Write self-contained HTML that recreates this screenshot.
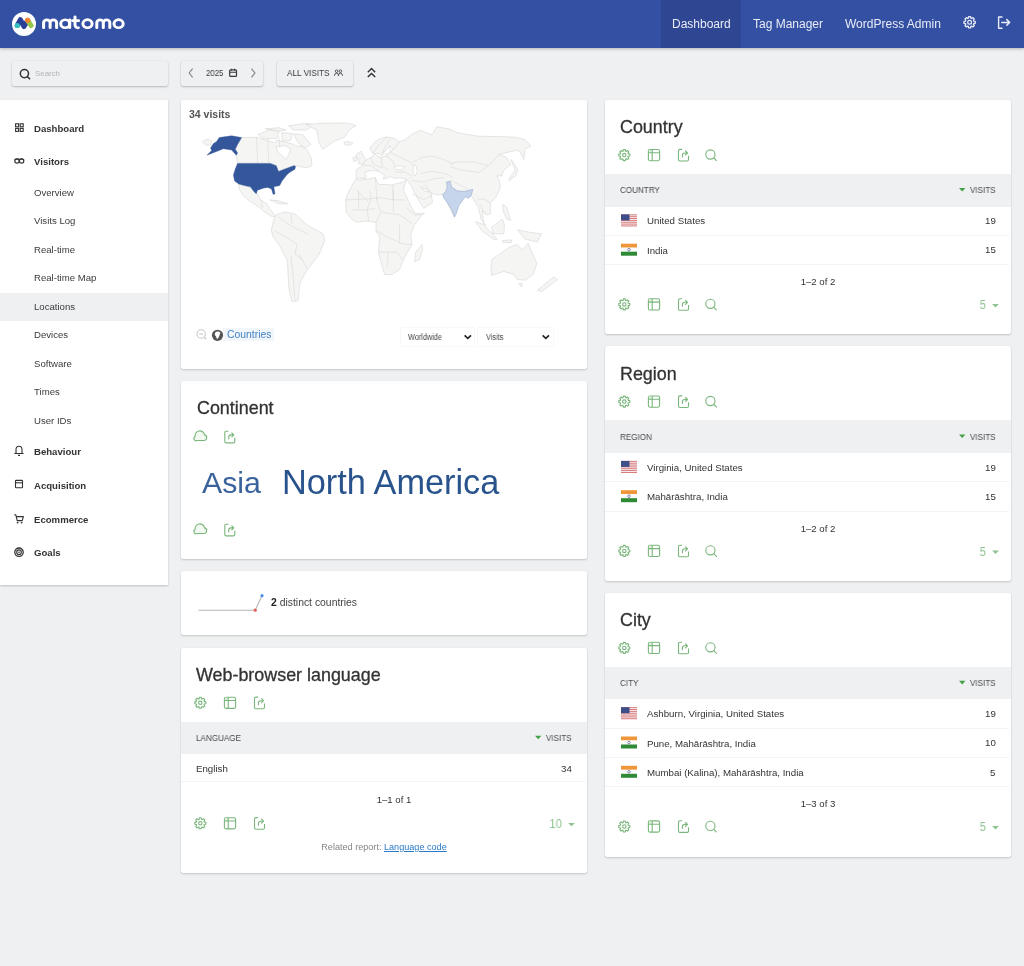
<!DOCTYPE html>
<html><head><meta charset="utf-8"><title>Matomo</title>
<style>
html,body{margin:0;padding:0;}
body{width:1024px;height:966px;overflow:hidden;position:relative;background:#eef0f1;font-family:"Liberation Sans",sans-serif;}
.t{position:absolute;line-height:1;white-space:nowrap;will-change:transform;}
svg{display:block;}
</style></head><body>

<div style="position:absolute;left:0px;top:0px;width:1024px;height:48px;background:#3450a3;box-shadow:0 1px 3px rgba(0,0,0,0.25);z-index:2;"></div>
<div style="position:absolute;left:661px;top:0px;width:80px;height:48px;background:#2f4793;z-index:3;"></div>
<div class="t" style="left:672.00px;top:18.04px;font-size:12px;color:#e9ecf6;font-weight:normal;z-index:4;">Dashboard</div>
<div class="t" style="left:753.00px;top:18.04px;font-size:12px;color:#e9ecf6;font-weight:normal;z-index:4;">Tag Manager</div>
<div class="t" style="left:845.00px;top:18.04px;font-size:12px;color:#e9ecf6;font-weight:normal;z-index:4;">WordPress Admin</div>
<svg style="position:absolute;left:960px;top:13px;z-index:4;" width="18" height="18" viewBox="960 13 18 18"><path d="M973.71,21.03 L975.22,21.34 L975.22,23.26 L973.71,23.57 L973.40,24.31 L974.25,25.59 L972.89,26.95 L971.61,26.10 L970.87,26.41 L970.56,27.92 L968.64,27.92 L968.33,26.41 L967.59,26.10 L966.31,26.95 L964.95,25.59 L965.80,24.31 L965.49,23.57 L963.98,23.26 L963.98,21.34 L965.49,21.03 L965.80,20.29 L964.95,19.01 L966.31,17.65 L967.59,18.50 L968.33,18.19 L968.64,16.68 L970.56,16.68 L970.87,18.19 L971.61,18.50 L972.89,17.65 L974.25,19.01 L973.40,20.29Z" fill="none" stroke="#e9ecf6" stroke-width="1.3" stroke-linejoin="round"/><circle cx="969.6" cy="22.3" r="1.9" fill="none" stroke="#e9ecf6" stroke-width="1.2"/></svg>
<svg style="position:absolute;left:994px;top:12px;z-index:4;" width="20" height="20" viewBox="994 12 20 20"><path d="M1002,17 H998.6 V28.2 H1002" fill="none" stroke="#e9ecf6" stroke-width="1.4" stroke-linejoin="round" stroke-linecap="round"/><path d="M1001.8,22.4 H1009.6 M1006.8,19.6 L1009.6,22.4 L1006.8,25.2" fill="none" stroke="#e9ecf6" stroke-width="1.5" stroke-linecap="round" stroke-linejoin="round"/></svg>
<svg style="position:absolute;left:0px;top:0px;z-index:4;" width="48" height="47" viewBox="0 0 48 47"><circle cx="24" cy="23.9" r="12" fill="#ffffff"/>
<path d="M17.3,25.5 L20.4,19.6 L24,26.6 L27.6,20.4" fill="none" stroke="#2a3f96" stroke-width="5" stroke-linecap="round" stroke-linejoin="round"/>
<path d="M27.7,20.4 L31,25.5" fill="none" stroke="#95c748" stroke-width="5" stroke-linecap="round"/>
<circle cx="17.3" cy="25.5" r="2.6" fill="#35bfc0"/>
<circle cx="27.7" cy="20.3" r="2.6" fill="#f38334"/>
</svg>
<svg style="position:absolute;left:38px;top:12px;z-index:4;" width="90" height="22" viewBox="38 12 90 22"><g transform="matrix(1 0 0 0.88 0 2.62)"><path d="M43.6,28.6 V22.8 A3.25,3.25 0 0 1 50.1,22.8 V28.6 M50.1,22.8 A3.25,3.25 0 0 1 56.6,22.8 V28.6" fill="none" stroke="#ffffff" stroke-width="3.0" stroke-linecap="round"/><circle cx="65.2" cy="24" r="4.5" fill="none" stroke="#ffffff" stroke-width="3.0"/><path d="M69.7,19.6 V28.6" stroke="#ffffff" stroke-width="3.0" stroke-linecap="round"/><path d="M75,16.2 V25.4 A3,3 0 0 0 78.4,28.6 M72.6,20.5 H78.6" fill="none" stroke="#ffffff" stroke-width="3.0" stroke-linecap="round"/><circle cx="87.5" cy="24" r="4.6" fill="none" stroke="#ffffff" stroke-width="3.0"/><path d="M96.8,28.6 V22.8 A3.25,3.25 0 0 1 103.3,22.8 V28.6 M103.3,22.8 A3.25,3.25 0 0 1 109.8,22.8 V28.6" fill="none" stroke="#ffffff" stroke-width="3.0" stroke-linecap="round"/><circle cx="118.6" cy="24" r="4.6" fill="none" stroke="#ffffff" stroke-width="3.0"/></g></svg>
<div style="position:absolute;left:12px;top:61px;width:156px;height:25px;background:#eef0f1;box-shadow:0 1px 2px rgba(0,0,0,0.22),0 0 1px rgba(0,0,0,0.12);border-radius:2px;"></div>
<svg style="position:absolute;left:17px;top:66px;" width="16" height="16" viewBox="17 66 16 16"><circle cx="24.4" cy="73.6" r="4.1" fill="none" stroke="#333" stroke-width="1.5"/><path d="M27.4,76.6 L29.6,78.8" stroke="#333" stroke-width="1.6" stroke-linecap="round"/></svg>
<div class="t" style="left:35.00px;top:70.11px;font-size:7.9px;color:#b5b5b5;font-weight:normal;">Search</div>
<div style="position:absolute;left:181px;top:61px;width:82px;height:25px;background:#eef0f1;box-shadow:0 1px 2px rgba(0,0,0,0.22),0 0 1px rgba(0,0,0,0.12);border-radius:2px;"></div>
<svg style="position:absolute;left:185px;top:66px;" width="12" height="14" viewBox="185 66 12 14"><path d="M192.6,68.6 L189.2,73 L192.6,77.4" fill="none" stroke="#888" stroke-width="1.2"/></svg>
<div class="t" style="left:206.20px;top:68.81px;font-size:9.2px;color:#3a3a3a;font-weight:normal;transform:scaleX(0.85);transform-origin:0 0;">2025</div>
<svg style="position:absolute;left:227px;top:66px;" width="12" height="14" viewBox="227 66 12 14"><rect x="229.7" y="69.8" width="6.8" height="6.6" rx="0.9" fill="none" stroke="#3a3a3a" stroke-width="1.2"/><path d="M229.7,72.2 H236.5 M231.6,68.8 V70.4 M234.6,68.8 V70.4" stroke="#3a3a3a" stroke-width="1.1"/></svg>
<svg style="position:absolute;left:246px;top:66px;" width="12" height="14" viewBox="246 66 12 14"><path d="M251.5,68.6 L254.9,73 L251.5,77.4" fill="none" stroke="#888" stroke-width="1.2"/></svg>
<div style="position:absolute;left:277px;top:61px;width:76px;height:25px;background:#eef0f1;box-shadow:0 1px 2px rgba(0,0,0,0.22),0 0 1px rgba(0,0,0,0.12);border-radius:2px;"></div>
<div class="t" style="left:287.00px;top:68.47px;font-size:9.6px;color:#3a3a3a;font-weight:normal;transform:scaleX(0.855);transform-origin:0 0;">ALL VISITS</div>
<svg style="position:absolute;left:332px;top:66px;" width="13" height="12" viewBox="332 66 13 12"><circle cx="336.6" cy="71.2" r="1.3" fill="none" stroke="#555" stroke-width="1.0"/><circle cx="340.4" cy="71.2" r="1.3" fill="none" stroke="#555" stroke-width="1.0"/><path d="M334.4,75.8 Q334.6,73.2 336.6,73.2 Q338.6,73.2 338.8,75.8 M338.2,75.8 Q338.4,73.2 340.4,73.2 Q342.4,73.2 342.6,75.8" fill="none" stroke="#555" stroke-width="1.0"/></svg>
<svg style="position:absolute;left:364px;top:64px;" width="14" height="16" viewBox="364 64 14 16"><path d="M367.8,72.3 L371.5,68.6 L375.2,72.3 M367.8,77.1 L371.5,73.4 L375.2,77.1" fill="none" stroke="#333" stroke-width="1.4" stroke-linejoin="miter"/></svg>
<div style="position:absolute;left:0px;top:100px;width:168px;height:485px;background:#fff;box-shadow:0 1px 2px rgba(0,0,0,0.2);"></div>
<div style="position:absolute;left:0px;top:293px;width:168px;height:28px;background:#eef0f1;"></div>
<div class="t" style="left:34.00px;top:123.57px;font-size:9.6px;color:#333;font-weight:bold;">Dashboard</div>
<div class="t" style="left:34.00px;top:157.27px;font-size:9.6px;color:#333;font-weight:bold;">Visitors</div>
<div class="t" style="left:34.00px;top:446.87px;font-size:9.6px;color:#333;font-weight:bold;">Behaviour</div>
<div class="t" style="left:34.00px;top:480.57px;font-size:9.6px;color:#333;font-weight:bold;">Acquisition</div>
<div class="t" style="left:34.00px;top:514.57px;font-size:9.6px;color:#333;font-weight:bold;">Ecommerce</div>
<div class="t" style="left:34.00px;top:548.17px;font-size:9.6px;color:#333;font-weight:bold;">Goals</div>
<div class="t" style="left:34.00px;top:187.87px;font-size:9.6px;color:#3b3b3b;font-weight:normal;">Overview</div>
<div class="t" style="left:34.00px;top:216.37px;font-size:9.6px;color:#3b3b3b;font-weight:normal;">Visits Log</div>
<div class="t" style="left:34.00px;top:244.87px;font-size:9.6px;color:#3b3b3b;font-weight:normal;">Real-time</div>
<div class="t" style="left:34.00px;top:273.37px;font-size:9.6px;color:#3b3b3b;font-weight:normal;">Real-time Map</div>
<div class="t" style="left:34.00px;top:301.87px;font-size:9.6px;color:#3b3b3b;font-weight:normal;">Locations</div>
<div class="t" style="left:34.00px;top:330.37px;font-size:9.6px;color:#3b3b3b;font-weight:normal;">Devices</div>
<div class="t" style="left:34.00px;top:358.87px;font-size:9.6px;color:#3b3b3b;font-weight:normal;">Software</div>
<div class="t" style="left:34.00px;top:387.17px;font-size:9.6px;color:#3b3b3b;font-weight:normal;">Times</div>
<div class="t" style="left:34.00px;top:415.57px;font-size:9.6px;color:#3b3b3b;font-weight:normal;">User IDs</div>
<svg style="position:absolute;left:13px;top:121px;" width="12" height="12" viewBox="13 121 12 12"><rect x="15.6" y="123.8" width="3" height="3" fill="none" stroke="#333" stroke-width="1.1"/><rect x="15.6" y="128.4" width="3" height="3" fill="none" stroke="#333" stroke-width="1.1"/><rect x="20.2" y="123.8" width="3" height="3" fill="none" stroke="#333" stroke-width="1.1"/><rect x="20.2" y="128.4" width="3" height="3" fill="none" stroke="#333" stroke-width="1.1"/></svg>
<svg style="position:absolute;left:12px;top:155px;" width="14" height="10" viewBox="12 155 14 10"><circle cx="17" cy="161" r="2.2" fill="none" stroke="#333" stroke-width="1.2"/><circle cx="21.6" cy="161" r="2.2" fill="none" stroke="#333" stroke-width="1.2"/><path d="M14.6,160 Q16,158.4 19.3,159.2 Q22.6,158.4 24,160" fill="none" stroke="#333" stroke-width="1.1"/></svg>
<svg style="position:absolute;left:12px;top:444px;" width="14" height="14" viewBox="12 444 14 14"><path d="M16,453.5 V449.6 Q16,446.2 19,446.2 Q22,446.2 22,449.6 V453.5 H23.2 H14.8 Z" fill="none" stroke="#333" stroke-width="1.1" stroke-linejoin="round"/><path d="M18,455.4 H20" stroke="#333" stroke-width="1.1"/></svg>
<svg style="position:absolute;left:12px;top:478px;" width="14" height="14" viewBox="12 478 14 14"><rect x="15.5" y="480.4" width="7" height="7.4" rx="0.6" fill="none" stroke="#333" stroke-width="1.1"/><path d="M15.5,482.8 H22.5" stroke="#333" stroke-width="1.1"/></svg>
<svg style="position:absolute;left:12px;top:512px;" width="14" height="14" viewBox="12 512 14 14"><path d="M14.2,514.8 H15.8 L17.2,520.6 H22.2 L23.4,516.6 H16.4" fill="none" stroke="#333" stroke-width="1.1" stroke-linejoin="round"/><circle cx="17.6" cy="522.6" r="0.9" fill="#333"/><circle cx="21.6" cy="522.6" r="0.9" fill="#333"/></svg>
<svg style="position:absolute;left:12px;top:545px;" width="14" height="14" viewBox="12 545 14 14"><circle cx="19" cy="552.2" r="4.2" fill="none" stroke="#333" stroke-width="1.3"/><circle cx="19" cy="552.2" r="2.3" fill="none" stroke="#333" stroke-width="1.1"/><circle cx="19" cy="552.2" r="0.8" fill="#333"/></svg>
<div style="position:absolute;left:605px;top:100px;width:406px;height:234px;background:#fff;border-radius:2px;box-shadow:0 1px 2px rgba(0,0,0,0.18),0 0 1px rgba(0,0,0,0.10);"></div>
<div class="t" style="left:620.00px;top:119.15px;font-size:17.9px;color:#333;font-weight:normal;-webkit-text-stroke:0.3px #333;">Country</div>
<svg style="position:absolute;left:0px;top:145px;" width="1024" height="20" viewBox="0 145 1024 20"><path d="M628.22,153.89 L629.82,154.15 L629.82,156.05 L628.22,156.31 L627.93,157.01 L628.87,158.33 L627.53,159.67 L626.21,158.73 L625.51,159.02 L625.25,160.62 L623.35,160.62 L623.09,159.02 L622.39,158.73 L621.07,159.67 L619.73,158.33 L620.67,157.01 L620.38,156.31 L618.78,156.05 L618.78,154.15 L620.38,153.89 L620.67,153.19 L619.73,151.87 L621.07,150.53 L622.39,151.47 L623.09,151.18 L623.35,149.58 L625.25,149.58 L625.51,151.18 L626.21,151.47 L627.53,150.53 L628.87,151.87 L627.93,153.19Z" fill="none" stroke="#79b67b" stroke-width="1.1" stroke-linejoin="round"/><circle cx="624.3" cy="155.1" r="1.7" fill="none" stroke="#79b67b" stroke-width="1.1"/><rect x="648.40" y="149.50" width="11.2" height="11.2" rx="1.6" fill="none" stroke="#79b67b" stroke-width="1.1"/><rect x="648.90" y="150.00" width="3.2" height="2.8" fill="#dff0df"/><path d="M648.40,152.80 H659.60 M652.20,149.50 V160.70" stroke="#79b67b" stroke-width="1.1"/><path d="M682.10,149.40 H679.90 Q678.50,149.40 678.50,150.80 V159.60 Q678.50,161.00 679.90,161.00 H687.10 Q688.50,161.00 688.50,159.60 V155.80" fill="none" stroke="#79b67b" stroke-width="1.1" stroke-linejoin="round"/><path d="M682.40,157.00 V155.40 Q682.40,153.00 684.70,153.00 H687.30 M685.50,151.00 L687.50,153.00 L685.50,155.00" fill="none" stroke="#79b67b" stroke-width="1.1" stroke-linecap="round" stroke-linejoin="round"/><circle cx="710.40" cy="154.50" r="4.6" fill="none" stroke="#79b67b" stroke-width="1.1"/><path d="M713.80,157.90 L716.40,160.50" stroke="#79b67b" stroke-width="1.1" stroke-linecap="round"/></svg>
<div style="position:absolute;left:605px;top:174px;width:406px;height:33px;background:#eef0f1;"></div>
<div class="t" style="left:620.00px;top:186.14px;font-size:8.7px;color:#4a4a4a;font-weight:normal;transform:scaleX(0.93);transform-origin:0 0;">COUNTRY</div>
<div class="t" style="right:28.20px;top:186.14px;font-size:8.7px;color:#4a4a4a;font-weight:normal;transform:scaleX(0.93);transform-origin:100% 0;">VISITS</div>
<svg style="position:absolute;left:958px;top:184px;" width="10" height="8" viewBox="958 184 10 8"><path d="M959.00,188.00 H965.40 L962.20,191.60 Z" fill="#43a047"/></svg>
<div class="t" style="left:647.00px;top:216.49px;font-size:9.7px;color:#333;font-weight:normal;">United States</div>
<div class="t" style="right:28.20px;top:216.19px;font-size:9.7px;color:#333;font-weight:normal;">19</div>
<div style="position:absolute;left:605px;top:235px;width:404px;height:1px;background:#f2f3f4;"></div>
<div class="t" style="left:647.00px;top:245.79px;font-size:9.7px;color:#333;font-weight:normal;">India</div>
<div class="t" style="right:28.20px;top:245.49px;font-size:9.7px;color:#333;font-weight:normal;">15</div>
<div style="position:absolute;left:605px;top:264px;width:404px;height:1px;background:#f2f3f4;"></div>
<svg style="position:absolute;left:605px;top:205px;" width="40" height="61" viewBox="605 205 40 61"><rect x="621" y="214.4" width="16" height="12" fill="#f4f4f8"/><rect x="621" y="214.40" width="16" height="0.92" fill="#d9706f"/><rect x="621" y="216.25" width="16" height="0.92" fill="#d9706f"/><rect x="621" y="218.09" width="16" height="0.92" fill="#d9706f"/><rect x="621" y="219.94" width="16" height="0.92" fill="#d9706f"/><rect x="621" y="221.78" width="16" height="0.92" fill="#d9706f"/><rect x="621" y="223.63" width="16" height="0.92" fill="#d9706f"/><rect x="621" y="225.48" width="16" height="0.92" fill="#d9706f"/><rect x="621" y="214.4" width="8.5" height="6" fill="#3d4e88"/><rect x="621" y="243.70000000000002" width="16" height="4" fill="#f0963a"/><rect x="621" y="247.70000000000002" width="16" height="4" fill="#fbfbfb"/><rect x="621" y="251.70000000000002" width="16" height="4" fill="#2f8a36"/><circle cx="629" cy="249.70000000000002" r="1.3" fill="none" stroke="#4a4a8a" stroke-width="0.6"/></svg>
<div class="t" style="left:618.30px;width:400px;text-align:center;top:277.07px;font-size:9.6px;color:#333;font-weight:normal;">1–2 of 2</div>
<svg style="position:absolute;left:0px;top:294px;" width="1024" height="20" viewBox="0 294 1024 20"><path d="M628.22,303.19 L629.82,303.45 L629.82,305.35 L628.22,305.61 L627.93,306.31 L628.87,307.63 L627.53,308.97 L626.21,308.03 L625.51,308.32 L625.25,309.92 L623.35,309.92 L623.09,308.32 L622.39,308.03 L621.07,308.97 L619.73,307.63 L620.67,306.31 L620.38,305.61 L618.78,305.35 L618.78,303.45 L620.38,303.19 L620.67,302.49 L619.73,301.17 L621.07,299.83 L622.39,300.77 L623.09,300.48 L623.35,298.88 L625.25,298.88 L625.51,300.48 L626.21,300.77 L627.53,299.83 L628.87,301.17 L627.93,302.49Z" fill="none" stroke="#79b67b" stroke-width="1.1" stroke-linejoin="round"/><circle cx="624.3" cy="304.4" r="1.7" fill="none" stroke="#79b67b" stroke-width="1.1"/><rect x="648.40" y="298.80" width="11.2" height="11.2" rx="1.6" fill="none" stroke="#79b67b" stroke-width="1.1"/><rect x="648.90" y="299.30" width="3.2" height="2.8" fill="#dff0df"/><path d="M648.40,302.10 H659.60 M652.20,298.80 V310.00" stroke="#79b67b" stroke-width="1.1"/><path d="M682.10,298.70 H679.90 Q678.50,298.70 678.50,300.10 V308.90 Q678.50,310.30 679.90,310.30 H687.10 Q688.50,310.30 688.50,308.90 V305.10" fill="none" stroke="#79b67b" stroke-width="1.1" stroke-linejoin="round"/><path d="M682.40,306.30 V304.70 Q682.40,302.30 684.70,302.30 H687.30 M685.50,300.30 L687.50,302.30 L685.50,304.30" fill="none" stroke="#79b67b" stroke-width="1.1" stroke-linecap="round" stroke-linejoin="round"/><circle cx="710.40" cy="303.80" r="4.6" fill="none" stroke="#79b67b" stroke-width="1.1"/><path d="M713.80,307.20 L716.40,309.80" stroke="#79b67b" stroke-width="1.1" stroke-linecap="round"/></svg>
<div class="t" style="right:37.70px;top:299.32px;font-size:12.5px;color:#8fc391;font-weight:normal;transform:scaleX(0.9);transform-origin:100% 0;">5</div>
<svg style="position:absolute;left:991px;top:301px;" width="10" height="8" viewBox="991 301 10 8"><path d="M992.10,304.00 H998.90 L995.50,307.40 Z" fill="#8fc391"/></svg>
<div style="position:absolute;left:605px;top:346px;width:406px;height:235px;background:#fff;border-radius:2px;box-shadow:0 1px 2px rgba(0,0,0,0.18),0 0 1px rgba(0,0,0,0.10);"></div>
<div class="t" style="left:620.00px;top:365.65px;font-size:17.9px;color:#333;font-weight:normal;-webkit-text-stroke:0.3px #333;">Region</div>
<svg style="position:absolute;left:0px;top:391px;" width="1024" height="20" viewBox="0 391 1024 20"><path d="M628.22,400.39 L629.82,400.65 L629.82,402.55 L628.22,402.81 L627.93,403.51 L628.87,404.83 L627.53,406.17 L626.21,405.23 L625.51,405.52 L625.25,407.12 L623.35,407.12 L623.09,405.52 L622.39,405.23 L621.07,406.17 L619.73,404.83 L620.67,403.51 L620.38,402.81 L618.78,402.55 L618.78,400.65 L620.38,400.39 L620.67,399.69 L619.73,398.37 L621.07,397.03 L622.39,397.97 L623.09,397.68 L623.35,396.08 L625.25,396.08 L625.51,397.68 L626.21,397.97 L627.53,397.03 L628.87,398.37 L627.93,399.69Z" fill="none" stroke="#79b67b" stroke-width="1.1" stroke-linejoin="round"/><circle cx="624.3" cy="401.6" r="1.7" fill="none" stroke="#79b67b" stroke-width="1.1"/><rect x="648.40" y="396.00" width="11.2" height="11.2" rx="1.6" fill="none" stroke="#79b67b" stroke-width="1.1"/><rect x="648.90" y="396.50" width="3.2" height="2.8" fill="#dff0df"/><path d="M648.40,399.30 H659.60 M652.20,396.00 V407.20" stroke="#79b67b" stroke-width="1.1"/><path d="M682.10,395.90 H679.90 Q678.50,395.90 678.50,397.30 V406.10 Q678.50,407.50 679.90,407.50 H687.10 Q688.50,407.50 688.50,406.10 V402.30" fill="none" stroke="#79b67b" stroke-width="1.1" stroke-linejoin="round"/><path d="M682.40,403.50 V401.90 Q682.40,399.50 684.70,399.50 H687.30 M685.50,397.50 L687.50,399.50 L685.50,401.50" fill="none" stroke="#79b67b" stroke-width="1.1" stroke-linecap="round" stroke-linejoin="round"/><circle cx="710.40" cy="401.00" r="4.6" fill="none" stroke="#79b67b" stroke-width="1.1"/><path d="M713.80,404.40 L716.40,407.00" stroke="#79b67b" stroke-width="1.1" stroke-linecap="round"/></svg>
<div style="position:absolute;left:605px;top:420px;width:406px;height:33px;background:#eef0f1;"></div>
<div class="t" style="left:620.00px;top:432.64px;font-size:8.7px;color:#4a4a4a;font-weight:normal;transform:scaleX(0.93);transform-origin:0 0;">REGION</div>
<div class="t" style="right:28.20px;top:432.64px;font-size:8.7px;color:#4a4a4a;font-weight:normal;transform:scaleX(0.93);transform-origin:100% 0;">VISITS</div>
<svg style="position:absolute;left:958px;top:431px;" width="10" height="8" viewBox="958 431 10 8"><path d="M959.00,434.50 H965.40 L962.20,438.10 Z" fill="#43a047"/></svg>
<div class="t" style="left:647.00px;top:462.99px;font-size:9.7px;color:#333;font-weight:normal;">Virginia, United States</div>
<div class="t" style="right:28.20px;top:462.69px;font-size:9.7px;color:#333;font-weight:normal;">19</div>
<div style="position:absolute;left:605px;top:481px;width:404px;height:1px;background:#f2f3f4;"></div>
<div class="t" style="left:647.00px;top:492.29px;font-size:9.7px;color:#333;font-weight:normal;">Mahārāshtra, India</div>
<div class="t" style="right:28.20px;top:491.99px;font-size:9.7px;color:#333;font-weight:normal;">15</div>
<div style="position:absolute;left:605px;top:511px;width:404px;height:1px;background:#f2f3f4;"></div>
<svg style="position:absolute;left:605px;top:452px;" width="40" height="61" viewBox="605 452 40 61"><rect x="621" y="460.90000000000003" width="16" height="12" fill="#f4f4f8"/><rect x="621" y="460.90" width="16" height="0.92" fill="#d9706f"/><rect x="621" y="462.75" width="16" height="0.92" fill="#d9706f"/><rect x="621" y="464.59" width="16" height="0.92" fill="#d9706f"/><rect x="621" y="466.44" width="16" height="0.92" fill="#d9706f"/><rect x="621" y="468.28" width="16" height="0.92" fill="#d9706f"/><rect x="621" y="470.13" width="16" height="0.92" fill="#d9706f"/><rect x="621" y="471.98" width="16" height="0.92" fill="#d9706f"/><rect x="621" y="460.90000000000003" width="8.5" height="6" fill="#3d4e88"/><rect x="621" y="490.20000000000005" width="16" height="4" fill="#f0963a"/><rect x="621" y="494.20000000000005" width="16" height="4" fill="#fbfbfb"/><rect x="621" y="498.20000000000005" width="16" height="4" fill="#2f8a36"/><circle cx="629" cy="496.20000000000005" r="1.3" fill="none" stroke="#4a4a8a" stroke-width="0.6"/></svg>
<div class="t" style="left:618.30px;width:400px;text-align:center;top:523.57px;font-size:9.6px;color:#333;font-weight:normal;">1–2 of 2</div>
<svg style="position:absolute;left:0px;top:540px;" width="1024" height="20" viewBox="0 540 1024 20"><path d="M628.22,549.69 L629.82,549.95 L629.82,551.85 L628.22,552.11 L627.93,552.81 L628.87,554.13 L627.53,555.47 L626.21,554.53 L625.51,554.82 L625.25,556.42 L623.35,556.42 L623.09,554.82 L622.39,554.53 L621.07,555.47 L619.73,554.13 L620.67,552.81 L620.38,552.11 L618.78,551.85 L618.78,549.95 L620.38,549.69 L620.67,548.99 L619.73,547.67 L621.07,546.33 L622.39,547.27 L623.09,546.98 L623.35,545.38 L625.25,545.38 L625.51,546.98 L626.21,547.27 L627.53,546.33 L628.87,547.67 L627.93,548.99Z" fill="none" stroke="#79b67b" stroke-width="1.1" stroke-linejoin="round"/><circle cx="624.3" cy="550.9000000000001" r="1.7" fill="none" stroke="#79b67b" stroke-width="1.1"/><rect x="648.40" y="545.30" width="11.2" height="11.2" rx="1.6" fill="none" stroke="#79b67b" stroke-width="1.1"/><rect x="648.90" y="545.80" width="3.2" height="2.8" fill="#dff0df"/><path d="M648.40,548.60 H659.60 M652.20,545.30 V556.50" stroke="#79b67b" stroke-width="1.1"/><path d="M682.10,545.20 H679.90 Q678.50,545.20 678.50,546.60 V555.40 Q678.50,556.80 679.90,556.80 H687.10 Q688.50,556.80 688.50,555.40 V551.60" fill="none" stroke="#79b67b" stroke-width="1.1" stroke-linejoin="round"/><path d="M682.40,552.80 V551.20 Q682.40,548.80 684.70,548.80 H687.30 M685.50,546.80 L687.50,548.80 L685.50,550.80" fill="none" stroke="#79b67b" stroke-width="1.1" stroke-linecap="round" stroke-linejoin="round"/><circle cx="710.40" cy="550.30" r="4.6" fill="none" stroke="#79b67b" stroke-width="1.1"/><path d="M713.80,553.70 L716.40,556.30" stroke="#79b67b" stroke-width="1.1" stroke-linecap="round"/></svg>
<div class="t" style="right:37.70px;top:545.82px;font-size:12.5px;color:#8fc391;font-weight:normal;transform:scaleX(0.9);transform-origin:100% 0;">5</div>
<svg style="position:absolute;left:991px;top:547px;" width="10" height="8" viewBox="991 547 10 8"><path d="M992.10,550.50 H998.90 L995.50,553.90 Z" fill="#8fc391"/></svg>
<div style="position:absolute;left:605px;top:593px;width:406px;height:264px;background:#fff;border-radius:2px;box-shadow:0 1px 2px rgba(0,0,0,0.18),0 0 1px rgba(0,0,0,0.10);"></div>
<div class="t" style="left:620.00px;top:611.95px;font-size:17.9px;color:#333;font-weight:normal;-webkit-text-stroke:0.3px #333;">City</div>
<svg style="position:absolute;left:0px;top:637px;" width="1024" height="20" viewBox="0 637 1024 20"><path d="M628.22,646.69 L629.82,646.95 L629.82,648.85 L628.22,649.11 L627.93,649.81 L628.87,651.13 L627.53,652.47 L626.21,651.53 L625.51,651.82 L625.25,653.42 L623.35,653.42 L623.09,651.82 L622.39,651.53 L621.07,652.47 L619.73,651.13 L620.67,649.81 L620.38,649.11 L618.78,648.85 L618.78,646.95 L620.38,646.69 L620.67,645.99 L619.73,644.67 L621.07,643.33 L622.39,644.27 L623.09,643.98 L623.35,642.38 L625.25,642.38 L625.51,643.98 L626.21,644.27 L627.53,643.33 L628.87,644.67 L627.93,645.99Z" fill="none" stroke="#79b67b" stroke-width="1.1" stroke-linejoin="round"/><circle cx="624.3" cy="647.9" r="1.7" fill="none" stroke="#79b67b" stroke-width="1.1"/><rect x="648.40" y="642.30" width="11.2" height="11.2" rx="1.6" fill="none" stroke="#79b67b" stroke-width="1.1"/><rect x="648.90" y="642.80" width="3.2" height="2.8" fill="#dff0df"/><path d="M648.40,645.60 H659.60 M652.20,642.30 V653.50" stroke="#79b67b" stroke-width="1.1"/><path d="M682.10,642.20 H679.90 Q678.50,642.20 678.50,643.60 V652.40 Q678.50,653.80 679.90,653.80 H687.10 Q688.50,653.80 688.50,652.40 V648.60" fill="none" stroke="#79b67b" stroke-width="1.1" stroke-linejoin="round"/><path d="M682.40,649.80 V648.20 Q682.40,645.80 684.70,645.80 H687.30 M685.50,643.80 L687.50,645.80 L685.50,647.80" fill="none" stroke="#79b67b" stroke-width="1.1" stroke-linecap="round" stroke-linejoin="round"/><circle cx="710.40" cy="647.30" r="4.6" fill="none" stroke="#79b67b" stroke-width="1.1"/><path d="M713.80,650.70 L716.40,653.30" stroke="#79b67b" stroke-width="1.1" stroke-linecap="round"/></svg>
<div style="position:absolute;left:605px;top:667px;width:406px;height:32px;background:#eef0f1;"></div>
<div class="t" style="left:620.00px;top:678.94px;font-size:8.7px;color:#4a4a4a;font-weight:normal;transform:scaleX(0.93);transform-origin:0 0;">CITY</div>
<div class="t" style="right:28.20px;top:678.94px;font-size:8.7px;color:#4a4a4a;font-weight:normal;transform:scaleX(0.93);transform-origin:100% 0;">VISITS</div>
<svg style="position:absolute;left:958px;top:677px;" width="10" height="8" viewBox="958 677 10 8"><path d="M959.00,680.80 H965.40 L962.20,684.40 Z" fill="#43a047"/></svg>
<div class="t" style="left:647.00px;top:709.29px;font-size:9.7px;color:#333;font-weight:normal;">Ashburn, Virginia, United States</div>
<div class="t" style="right:28.20px;top:708.99px;font-size:9.7px;color:#333;font-weight:normal;">19</div>
<div style="position:absolute;left:605px;top:728px;width:404px;height:1px;background:#f2f3f4;"></div>
<div class="t" style="left:647.00px;top:738.59px;font-size:9.7px;color:#333;font-weight:normal;">Pune, Mahārāshtra, India</div>
<div class="t" style="right:28.20px;top:738.29px;font-size:9.7px;color:#333;font-weight:normal;">10</div>
<div style="position:absolute;left:605px;top:757px;width:404px;height:1px;background:#f2f3f4;"></div>
<div class="t" style="left:647.00px;top:767.89px;font-size:9.7px;color:#333;font-weight:normal;">Mumbai (Kalina), Mahārāshtra, India</div>
<div class="t" style="right:28.20px;top:767.59px;font-size:9.7px;color:#333;font-weight:normal;">5</div>
<div style="position:absolute;left:605px;top:786px;width:404px;height:1px;background:#f2f3f4;"></div>
<svg style="position:absolute;left:605px;top:698px;" width="40" height="90" viewBox="605 698 40 90"><rect x="621" y="707.1999999999999" width="16" height="12" fill="#f4f4f8"/><rect x="621" y="707.20" width="16" height="0.92" fill="#d9706f"/><rect x="621" y="709.05" width="16" height="0.92" fill="#d9706f"/><rect x="621" y="710.89" width="16" height="0.92" fill="#d9706f"/><rect x="621" y="712.74" width="16" height="0.92" fill="#d9706f"/><rect x="621" y="714.58" width="16" height="0.92" fill="#d9706f"/><rect x="621" y="716.43" width="16" height="0.92" fill="#d9706f"/><rect x="621" y="718.28" width="16" height="0.92" fill="#d9706f"/><rect x="621" y="707.1999999999999" width="8.5" height="6" fill="#3d4e88"/><rect x="621" y="736.4999999999999" width="16" height="4" fill="#f0963a"/><rect x="621" y="740.4999999999999" width="16" height="4" fill="#fbfbfb"/><rect x="621" y="744.4999999999999" width="16" height="4" fill="#2f8a36"/><circle cx="629" cy="742.4999999999999" r="1.3" fill="none" stroke="#4a4a8a" stroke-width="0.6"/><rect x="621" y="765.7999999999998" width="16" height="4" fill="#f0963a"/><rect x="621" y="769.7999999999998" width="16" height="4" fill="#fbfbfb"/><rect x="621" y="773.7999999999998" width="16" height="4" fill="#2f8a36"/><circle cx="629" cy="771.7999999999998" r="1.3" fill="none" stroke="#4a4a8a" stroke-width="0.6"/></svg>
<div class="t" style="left:618.30px;width:400px;text-align:center;top:799.17px;font-size:9.6px;color:#333;font-weight:normal;">1–3 of 3</div>
<svg style="position:absolute;left:0px;top:816px;" width="1024" height="20" viewBox="0 816 1024 20"><path d="M628.22,825.29 L629.82,825.55 L629.82,827.45 L628.22,827.71 L627.93,828.41 L628.87,829.73 L627.53,831.07 L626.21,830.13 L625.51,830.42 L625.25,832.02 L623.35,832.02 L623.09,830.42 L622.39,830.13 L621.07,831.07 L619.73,829.73 L620.67,828.41 L620.38,827.71 L618.78,827.45 L618.78,825.55 L620.38,825.29 L620.67,824.59 L619.73,823.27 L621.07,821.93 L622.39,822.87 L623.09,822.58 L623.35,820.98 L625.25,820.98 L625.51,822.58 L626.21,822.87 L627.53,821.93 L628.87,823.27 L627.93,824.59Z" fill="none" stroke="#79b67b" stroke-width="1.1" stroke-linejoin="round"/><circle cx="624.3" cy="826.4999999999999" r="1.7" fill="none" stroke="#79b67b" stroke-width="1.1"/><rect x="648.40" y="820.90" width="11.2" height="11.2" rx="1.6" fill="none" stroke="#79b67b" stroke-width="1.1"/><rect x="648.90" y="821.40" width="3.2" height="2.8" fill="#dff0df"/><path d="M648.40,824.20 H659.60 M652.20,820.90 V832.10" stroke="#79b67b" stroke-width="1.1"/><path d="M682.10,820.80 H679.90 Q678.50,820.80 678.50,822.20 V831.00 Q678.50,832.40 679.90,832.40 H687.10 Q688.50,832.40 688.50,831.00 V827.20" fill="none" stroke="#79b67b" stroke-width="1.1" stroke-linejoin="round"/><path d="M682.40,828.40 V826.80 Q682.40,824.40 684.70,824.40 H687.30 M685.50,822.40 L687.50,824.40 L685.50,826.40" fill="none" stroke="#79b67b" stroke-width="1.1" stroke-linecap="round" stroke-linejoin="round"/><circle cx="710.40" cy="825.90" r="4.6" fill="none" stroke="#79b67b" stroke-width="1.1"/><path d="M713.80,829.30 L716.40,831.90" stroke="#79b67b" stroke-width="1.1" stroke-linecap="round"/></svg>
<div class="t" style="right:37.70px;top:821.42px;font-size:12.5px;color:#8fc391;font-weight:normal;transform:scaleX(0.9);transform-origin:100% 0;">5</div>
<svg style="position:absolute;left:991px;top:823px;" width="10" height="8" viewBox="991 823 10 8"><path d="M992.10,826.10 H998.90 L995.50,829.50 Z" fill="#8fc391"/></svg>
<div style="position:absolute;left:181px;top:648px;width:406px;height:225px;background:#fff;border-radius:2px;box-shadow:0 1px 2px rgba(0,0,0,0.18),0 0 1px rgba(0,0,0,0.10);"></div>
<div class="t" style="left:196.00px;top:666.85px;font-size:17.9px;color:#333;font-weight:normal;-webkit-text-stroke:0.3px #333;">Web-browser language</div>
<svg style="position:absolute;left:0px;top:692px;" width="1024" height="20" viewBox="0 692 1024 20"><path d="M204.22,701.59 L205.82,701.85 L205.82,703.75 L204.22,704.01 L203.93,704.71 L204.87,706.03 L203.53,707.37 L202.21,706.43 L201.51,706.72 L201.25,708.32 L199.35,708.32 L199.09,706.72 L198.39,706.43 L197.07,707.37 L195.73,706.03 L196.67,704.71 L196.38,704.01 L194.78,703.75 L194.78,701.85 L196.38,701.59 L196.67,700.89 L195.73,699.57 L197.07,698.23 L198.39,699.17 L199.09,698.88 L199.35,697.28 L201.25,697.28 L201.51,698.88 L202.21,699.17 L203.53,698.23 L204.87,699.57 L203.93,700.89Z" fill="none" stroke="#79b67b" stroke-width="1.1" stroke-linejoin="round"/><circle cx="200.3" cy="702.8" r="1.7" fill="none" stroke="#79b67b" stroke-width="1.1"/><rect x="224.40" y="697.20" width="11.2" height="11.2" rx="1.6" fill="none" stroke="#79b67b" stroke-width="1.1"/><rect x="224.90" y="697.70" width="3.2" height="2.8" fill="#dff0df"/><path d="M224.40,700.50 H235.60 M228.20,697.20 V708.40" stroke="#79b67b" stroke-width="1.1"/><path d="M258.10,697.10 H255.90 Q254.50,697.10 254.50,698.50 V707.30 Q254.50,708.70 255.90,708.70 H263.10 Q264.50,708.70 264.50,707.30 V703.50" fill="none" stroke="#79b67b" stroke-width="1.1" stroke-linejoin="round"/><path d="M258.40,704.70 V703.10 Q258.40,700.70 260.70,700.70 H263.30 M261.50,698.70 L263.50,700.70 L261.50,702.70" fill="none" stroke="#79b67b" stroke-width="1.1" stroke-linecap="round" stroke-linejoin="round"/></svg>
<div style="position:absolute;left:181px;top:722px;width:406px;height:32px;background:#eef0f1;"></div>
<div class="t" style="left:196.00px;top:733.84px;font-size:8.7px;color:#4a4a4a;font-weight:normal;transform:scaleX(0.93);transform-origin:0 0;">LANGUAGE</div>
<div class="t" style="right:452.20px;top:733.84px;font-size:8.7px;color:#4a4a4a;font-weight:normal;transform:scaleX(0.93);transform-origin:100% 0;">VISITS</div>
<svg style="position:absolute;left:534px;top:732px;" width="10" height="8" viewBox="534 732 10 8"><path d="M535.00,735.70 H541.40 L538.20,739.30 Z" fill="#43a047"/></svg>
<div class="t" style="left:195.50px;top:764.19px;font-size:9.7px;color:#333;font-weight:normal;">English</div>
<div class="t" style="right:452.20px;top:763.89px;font-size:9.7px;color:#333;font-weight:normal;">34</div>
<div style="position:absolute;left:181px;top:781px;width:404px;height:1px;background:#f2f3f4;"></div>
<div class="t" style="left:194.30px;width:400px;text-align:center;top:795.07px;font-size:9.6px;color:#333;font-weight:normal;">1–1 of 1</div>
<svg style="position:absolute;left:0px;top:813px;" width="1024" height="20" viewBox="0 813 1024 20"><path d="M204.22,822.09 L205.82,822.35 L205.82,824.25 L204.22,824.51 L203.93,825.21 L204.87,826.53 L203.53,827.87 L202.21,826.93 L201.51,827.22 L201.25,828.82 L199.35,828.82 L199.09,827.22 L198.39,826.93 L197.07,827.87 L195.73,826.53 L196.67,825.21 L196.38,824.51 L194.78,824.25 L194.78,822.35 L196.38,822.09 L196.67,821.39 L195.73,820.07 L197.07,818.73 L198.39,819.67 L199.09,819.38 L199.35,817.78 L201.25,817.78 L201.51,819.38 L202.21,819.67 L203.53,818.73 L204.87,820.07 L203.93,821.39Z" fill="none" stroke="#79b67b" stroke-width="1.1" stroke-linejoin="round"/><circle cx="200.3" cy="823.3" r="1.7" fill="none" stroke="#79b67b" stroke-width="1.1"/><rect x="224.40" y="817.70" width="11.2" height="11.2" rx="1.6" fill="none" stroke="#79b67b" stroke-width="1.1"/><rect x="224.90" y="818.20" width="3.2" height="2.8" fill="#dff0df"/><path d="M224.40,821.00 H235.60 M228.20,817.70 V828.90" stroke="#79b67b" stroke-width="1.1"/><path d="M258.10,817.60 H255.90 Q254.50,817.60 254.50,819.00 V827.80 Q254.50,829.20 255.90,829.20 H263.10 Q264.50,829.20 264.50,827.80 V824.00" fill="none" stroke="#79b67b" stroke-width="1.1" stroke-linejoin="round"/><path d="M258.40,825.20 V823.60 Q258.40,821.20 260.70,821.20 H263.30 M261.50,819.20 L263.50,821.20 L261.50,823.20" fill="none" stroke="#79b67b" stroke-width="1.1" stroke-linecap="round" stroke-linejoin="round"/></svg>
<div class="t" style="right:461.70px;top:818.22px;font-size:12.5px;color:#8fc391;font-weight:normal;transform:scaleX(0.9);transform-origin:100% 0;">10</div>
<svg style="position:absolute;left:567px;top:820px;" width="10" height="8" viewBox="567 820 10 8"><path d="M568.10,822.90 H574.90 L571.50,826.30 Z" fill="#8fc391"/></svg>
<div class="t" style="left:184.00px;width:400px;text-align:center;top:843.20px;font-size:9.1px;color:#858585;font-weight:normal;">Related report: <span style="color:#2b7bc9;text-decoration:underline;">Language code</span></div>
<div style="position:absolute;left:181px;top:100px;width:406px;height:269px;background:#fff;border-radius:2px;box-shadow:0 1px 2px rgba(0,0,0,0.18),0 0 1px rgba(0,0,0,0.10);"></div>
<div class="t" style="left:188.50px;top:108.71px;font-size:10.5px;color:#555;font-weight:bold;">34 visits</div>
<svg style="position:absolute;left:181px;top:100px;" width="406" height="225" viewBox="181 100 406 225"><path d="M241.6,137.6 L258.1,137.3 L265.2,140.2 L274.5,142.5 L276.9,140.2 L285.1,142.0 L293.3,144.3 L295.6,145.7 L302.7,146.6 L307.3,150.2 L310.9,157.2 L312.0,164.2 L310.9,166.6 L305.0,167.7 L300.3,166.6 L294.5,165.4 L284.4,169.2 L278.5,171.6 L276.2,165.7 L270.3,163.4 L237.5,163.4 L236.3,155.2 L237.5,152.8 L235.2,149.3 L237.5,144.6Z" fill="#f5f5f4" stroke="#cfcfcf" stroke-width="0.5" stroke-linejoin="round"/><path d="M275.7,146.6 L285.1,145.7 L290.9,149.0 L288.6,154.8 L286.2,159.5 L282.7,156.0 L278.0,152.5Z" fill="#ffffff" stroke="#cfcfcf" stroke-width="0.5" stroke-linejoin="round"/><path d="M258.1,134.3 L268.7,130.2 L279.2,131.4 L276.9,138.4 L264.0,139.0Z" fill="#f5f5f4" stroke="#cfcfcf" stroke-width="0.5" stroke-linejoin="round"/><path d="M265.2,128.8 L279.2,127.7 L286.2,130.0 L279.2,130.8Z" fill="#f5f5f4" stroke="#cfcfcf" stroke-width="0.5" stroke-linejoin="round"/><path d="M288.6,125.8 L305.0,123.4 L314.4,124.6 L306.2,130.0 L293.3,130.0Z" fill="#f5f5f4" stroke="#cfcfcf" stroke-width="0.5" stroke-linejoin="round"/><path d="M293.3,133.8 L302.7,134.7 L310.9,144.3 L305.0,148.4 L298.0,142.5Z" fill="#f5f5f4" stroke="#cfcfcf" stroke-width="0.5" stroke-linejoin="round"/><path d="M281.6,132.6 L292.1,133.5 L290.9,140.2 L282.7,141.4Z" fill="#f5f5f4" stroke="#cfcfcf" stroke-width="0.5" stroke-linejoin="round"/><path d="M202.3,141.7 L207.0,139.3 L211.7,140.5 L210.5,145.2 L205.9,145.2Z" fill="#f5f5f4" stroke="#cfcfcf" stroke-width="0.5" stroke-linejoin="round"/><path d="M306.2,124.4 L323.8,123.2 L347.2,123.0 L356.1,125.5 L349.1,130.2 L344.4,137.3 L335.0,140.8 L328.0,145.5 L323.3,149.0 L322.6,149.0 L319.1,143.1 L316.7,130.2Z" fill="#f5f5f4" stroke="#cfcfcf" stroke-width="0.5" stroke-linejoin="round"/><path d="M343.9,142.5 L348.0,141.5 L352.9,142.8 L350.5,145.2 L345.0,145.0Z" fill="#f5f5f4" stroke="#cfcfcf" stroke-width="0.5" stroke-linejoin="round"/><path d="M238.5,183.7 L248.6,186.7 L256.6,192.7 L260.7,199.8 L266.7,203.8 L270.8,209.9 L275.8,217.0 L270.8,216.0 L264.7,211.9 L258.7,206.9 L250.6,201.8 L243.5,195.8 L239.5,189.7Z" fill="#f5f5f4" stroke="#cfcfcf" stroke-width="0.5" stroke-linejoin="round"/><path d="M269.8,199.8 L278.8,200.8 L287.9,203.8 L278.8,203.8Z" fill="#f5f5f4" stroke="#cfcfcf" stroke-width="0.5" stroke-linejoin="round"/><path d="M275.8,214.9 L284.9,211.9 L295.0,213.9 L307.1,225.0 L323.3,234.1 L324.9,240.2 L319.2,254.3 L308.1,268.5 L300.0,282.6 L298.0,300.8 L292.0,301.8 L288.9,288.6 L287.3,260.4 L279.9,246.2 L272.8,236.1 L271.2,230.1 L273.8,220.0Z" fill="#f5f5f4" stroke="#cfcfcf" stroke-width="0.5" stroke-linejoin="round"/><path d="M356.0,170.0 L358.5,168.2 L363.0,165.0 L362.0,162.0 L366.5,160.0 L371.0,157.5 L375.0,154.0 L377.0,155.8 L381.0,157.5 L386.0,156.0 L390.5,152.5 L393.0,149.0 L390.0,145.5 L387.5,151.0 L383.0,151.5 L382.2,155.8 L378.5,153.5 L372.8,153.4 L369.7,148.0 L374.0,143.0 L377.5,140.2 L382.0,138.0 L386.9,137.0 L394.7,138.6 L399.4,141.7 L405.1,139.6 L410.9,134.9 L420.3,130.2 L432.0,134.9 L436.7,126.7 L449.6,129.1 L457.0,132.6 L477.0,136.1 L503.9,136.7 L515.6,137.3 L525.0,139.6 L530.9,146.1 L525.0,149.0 L523.8,159.5 L520.0,152.0 L516.8,150.2 L499.2,154.3 L506.3,157.2 L510.9,164.2 L503.9,170.1 L501.6,175.9 L496.9,175.9 L499.2,180.6 L500.4,185.3 L499.8,189.4 L495.7,197.5 L490.4,202.9 L490.4,213.6 L486.3,215.0 L482.3,210.9 L483.6,223.0 L485.7,225.5 L481.0,219.0 L478.3,206.9 L475.6,202.9 L471.5,196.1 L464.0,191.5 L458.0,205.0 L454.5,217.1 L447.2,202.5 L442.8,194.4 L436.0,195.0 L431.0,193.0 L432.5,202.5 L423.7,208.3 L418.5,200.0 L410.6,184.9 L406.2,179.0 L400.0,177.8 L395.0,178.4 L390.0,176.5 L387.5,178.0 L383.0,179.0 L384.5,175.5 L379.0,171.5 L374.5,170.6 L369.0,170.8 L365.0,172.2 L365.8,178.4 L356.4,178.4Z" fill="#f5f5f4" stroke="#cfcfcf" stroke-width="0.5" stroke-linejoin="round"/><path d="M393.5,167.2 L398.5,165.8 L405.0,166.8 L402.0,169.6 L395.5,169.6Z" fill="#ffffff" stroke="#cfcfcf" stroke-width="0.5" stroke-linejoin="round"/><path d="M413.5,165.0 L416.0,165.5 L417.5,172.0 L415.0,176.0 L413.0,172.0Z" fill="#ffffff" stroke="#cfcfcf" stroke-width="0.5" stroke-linejoin="round"/><path d="M420.8,186.8 L426.5,189.5 L430.0,192.0 L425.0,191.5Z" fill="#ffffff" stroke="#cfcfcf" stroke-width="0.5" stroke-linejoin="round"/><path d="M382.5,153.0 L386.0,150.5 L389.5,146.0 L390.8,151.0 L386.5,154.5Z" fill="#ffffff" stroke="#cfcfcf" stroke-width="0.5" stroke-linejoin="round"/><path d="M355.6,155.8 L358.0,153.0 L361.1,151.1 L363.0,155.0 L365.8,159.7 L363.4,164.4 L358.0,163.5 L359.5,160.0Z" fill="#f5f5f4" stroke="#cfcfcf" stroke-width="0.5" stroke-linejoin="round"/><path d="M353.0,157.5 L356.8,156.5 L357.2,160.5 L353.5,161.5Z" fill="#f5f5f4" stroke="#cfcfcf" stroke-width="0.5" stroke-linejoin="round"/><path d="M355.6,179.0 L359.3,180.5 L375.4,177.6 L378.3,184.2 L391.5,184.9 L403.2,182.0 L406.2,179.8 L403.4,190.0 L412.0,208.6 L415.8,213.6 L424.5,213.0 L422.0,214.8 L414.5,224.8 L410.8,234.7 L412.0,244.7 L404.6,257.1 L399.6,269.5 L392.2,274.5 L384.7,274.5 L382.2,267.0 L378.5,252.1 L379.8,237.2 L376.0,231.0 L376.0,222.3 L367.3,221.1 L357.4,222.3 L352.4,219.8 L346.2,212.4 L345.6,199.9 L349.0,190.8Z" fill="#f5f5f4" stroke="#cfcfcf" stroke-width="0.5" stroke-linejoin="round"/><path d="M414.5,262.0 L415.8,252.1 L422.0,244.7 L422.6,249.6 L419.5,259.6Z" fill="#f5f5f4" stroke="#cfcfcf" stroke-width="0.5" stroke-linejoin="round"/><path d="M508.6,180.6 L515.6,175.9 L518.0,170.1 L513.3,161.9 L510.9,159.5 L515.0,170.1 L509.8,178.3Z" fill="#f5f5f4" stroke="#cfcfcf" stroke-width="0.5" stroke-linejoin="round"/><path d="M475.6,221.7 L483.6,224.4 L497.1,239.2 L494.4,239.9 L482.3,231.1Z" fill="#f5f5f4" stroke="#cfcfcf" stroke-width="0.5" stroke-linejoin="round"/><path d="M491.7,227.1 L502.5,219.0 L504.5,225.7 L503.8,233.8 L493.0,233.8Z" fill="#f5f5f4" stroke="#cfcfcf" stroke-width="0.5" stroke-linejoin="round"/><path d="M502.5,204.2 L506.5,206.9 L510.5,220.4 L506.5,219.0 L503.1,210.9Z" fill="#f5f5f4" stroke="#cfcfcf" stroke-width="0.5" stroke-linejoin="round"/><path d="M517.3,229.8 L530.7,232.5 L541.5,233.8 L537.4,241.9 L525.3,239.2Z" fill="#f5f5f4" stroke="#cfcfcf" stroke-width="0.5" stroke-linejoin="round"/><path d="M502.5,240.5 L511.9,239.9 L511.2,242.6 L503.1,242.6Z" fill="#f5f5f4" stroke="#cfcfcf" stroke-width="0.5" stroke-linejoin="round"/><path d="M491.7,259.4 L503.8,251.3 L509.2,247.3 L517.3,244.6 L522.6,250.0 L528.0,243.2 L532.1,252.6 L536.8,263.4 L533.4,274.2 L525.3,280.2 L517.3,279.6 L513.2,274.2 L503.8,271.5 L491.7,275.5 L491.0,267.4Z" fill="#f5f5f4" stroke="#cfcfcf" stroke-width="0.5" stroke-linejoin="round"/><path d="M518.6,283.6 L522.6,283.6 L521.3,287.0Z" fill="#f5f5f4" stroke="#cfcfcf" stroke-width="0.5" stroke-linejoin="round"/><path d="M537.4,290.3 L553.6,276.9 L557.6,279.6 L541.5,291.7Z" fill="#f5f5f4" stroke="#cfcfcf" stroke-width="0.5" stroke-linejoin="round"/><path d="M256.6,137.6 L257.6,163.5" fill="none" stroke="#cfcfcf" stroke-width="0.45" stroke-linejoin="round"/><path d="M267.7,137.2 L268.7,163.5" fill="none" stroke="#cfcfcf" stroke-width="0.45" stroke-linejoin="round"/><path d="M278.8,136.2 L279.9,147.3" fill="none" stroke="#cfcfcf" stroke-width="0.45" stroke-linejoin="round"/><path d="M278.8,217.0 L284.9,222.0 L295.0,228.1 L308.1,234.1" fill="none" stroke="#cfcfcf" stroke-width="0.45" stroke-linejoin="round"/><path d="M274.8,231.1 L284.9,236.1 L297.0,244.2 L295.0,254.3 L303.1,260.4" fill="none" stroke="#cfcfcf" stroke-width="0.45" stroke-linejoin="round"/><path d="M291.0,256.3 L293.0,274.5 L295.0,300.8" fill="none" stroke="#cfcfcf" stroke-width="0.45" stroke-linejoin="round"/><path d="M299.0,254.3 L307.1,268.5" fill="none" stroke="#cfcfcf" stroke-width="0.45" stroke-linejoin="round"/><path d="M291.0,213.9 L292.0,224.0" fill="none" stroke="#cfcfcf" stroke-width="0.45" stroke-linejoin="round"/><path d="M260.7,199.8 L262.7,207.9" fill="none" stroke="#cfcfcf" stroke-width="0.45" stroke-linejoin="round"/><path d="M345.6,199.9 L358.6,199.3 L371.1,198.7 L381.0,197.5 L393.4,199.9 L404.6,199.9" fill="none" stroke="#cfcfcf" stroke-width="0.45" stroke-linejoin="round"/><path d="M358.6,190.0 L358.6,208.6" fill="none" stroke="#cfcfcf" stroke-width="0.45" stroke-linejoin="round"/><path d="M369.8,190.0 L371.1,198.7 L367.3,208.6 L368.6,221.1" fill="none" stroke="#cfcfcf" stroke-width="0.45" stroke-linejoin="round"/><path d="M376.0,197.5 L381.0,212.4 L376.0,222.3" fill="none" stroke="#cfcfcf" stroke-width="0.45" stroke-linejoin="round"/><path d="M393.4,190.0 L393.4,212.4" fill="none" stroke="#cfcfcf" stroke-width="0.45" stroke-linejoin="round"/><path d="M382.2,212.4 L399.6,214.8 L412.0,223.5" fill="none" stroke="#cfcfcf" stroke-width="0.45" stroke-linejoin="round"/><path d="M399.6,224.8 L399.6,243.4 L412.0,244.7" fill="none" stroke="#cfcfcf" stroke-width="0.45" stroke-linejoin="round"/><path d="M377.3,231.0 L387.2,237.2 L399.6,242.2" fill="none" stroke="#cfcfcf" stroke-width="0.45" stroke-linejoin="round"/><path d="M378.5,252.1 L397.1,252.1" fill="none" stroke="#cfcfcf" stroke-width="0.45" stroke-linejoin="round"/><path d="M388.4,252.1 L387.2,267.0" fill="none" stroke="#cfcfcf" stroke-width="0.45" stroke-linejoin="round"/><path d="M397.1,252.1 L402.1,259.6" fill="none" stroke="#cfcfcf" stroke-width="0.45" stroke-linejoin="round"/><path d="M352.4,209.9 L364.8,209.9 L374.8,208.6" fill="none" stroke="#cfcfcf" stroke-width="0.45" stroke-linejoin="round"/><path d="M407.1,208.6 L414.5,214.8 L422.0,214.8" fill="none" stroke="#cfcfcf" stroke-width="0.45" stroke-linejoin="round"/><path d="M375.4,177.6 L376.9,199.6" fill="none" stroke="#cfcfcf" stroke-width="0.45" stroke-linejoin="round"/><path d="M393.0,184.9 L393.0,199.6" fill="none" stroke="#cfcfcf" stroke-width="0.45" stroke-linejoin="round"/><path d="M356.4,190.8 L368.1,201.0" fill="none" stroke="#cfcfcf" stroke-width="0.45" stroke-linejoin="round"/><path d="M412.0,180.5 L423.8,182.0 L432.5,179.0 L444.3,177.6" fill="none" stroke="#cfcfcf" stroke-width="0.45" stroke-linejoin="round"/><path d="M425.2,184.9 L431.1,193.7" fill="none" stroke="#cfcfcf" stroke-width="0.45" stroke-linejoin="round"/><path d="M412.0,193.7 L423.8,199.6 L432.5,195.2" fill="none" stroke="#cfcfcf" stroke-width="0.45" stroke-linejoin="round"/><path d="M413.3,161.9 L422.7,157.2 L432.0,156.0 L443.8,159.5 L453.1,164.2" fill="none" stroke="#cfcfcf" stroke-width="0.45" stroke-linejoin="round"/><path d="M420.3,173.6 L432.0,171.2 L446.1,173.6 L453.1,178.3" fill="none" stroke="#cfcfcf" stroke-width="0.45" stroke-linejoin="round"/><path d="M450.0,164.2 L457.0,161.9 L473.4,161.9 L488.7,165.4 L479.3,172.4 L461.7,170.1 L450.0,166.6" fill="none" stroke="#cfcfcf" stroke-width="0.45" stroke-linejoin="round"/><path d="M488.7,165.4 L499.2,154.8" fill="none" stroke="#cfcfcf" stroke-width="0.45" stroke-linejoin="round"/><path d="M450.0,180.0 L466.1,188.1 L471.5,192.1" fill="none" stroke="#cfcfcf" stroke-width="0.45" stroke-linejoin="round"/><path d="M476.9,200.2 L483.6,198.8 L490.4,202.9" fill="none" stroke="#cfcfcf" stroke-width="0.45" stroke-linejoin="round"/><path d="M479.6,204.2 L485.0,213.6" fill="none" stroke="#cfcfcf" stroke-width="0.45" stroke-linejoin="round"/><path d="M363.0,165.0 L372.0,166.0 L378.0,170.5" fill="none" stroke="#cfcfcf" stroke-width="0.45" stroke-linejoin="round"/><path d="M371.0,157.5 L373.0,164.0 L382.0,168.0" fill="none" stroke="#cfcfcf" stroke-width="0.45" stroke-linejoin="round"/><path d="M381.0,157.5 L382.0,166.0 L388.0,170.0" fill="none" stroke="#cfcfcf" stroke-width="0.45" stroke-linejoin="round"/><path d="M386.0,156.0 L392.0,160.0 L395.0,166.0" fill="none" stroke="#cfcfcf" stroke-width="0.45" stroke-linejoin="round"/><path d="M390.5,152.5 L398.0,156.0 L410.0,162.0 L413.0,165.0" fill="none" stroke="#cfcfcf" stroke-width="0.45" stroke-linejoin="round"/><path d="M399.4,141.7 L395.0,148.0 L393.0,149.0" fill="none" stroke="#cfcfcf" stroke-width="0.45" stroke-linejoin="round"/><path d="M372.8,153.4 L378.0,146.0 L386.9,137.0" fill="none" stroke="#cfcfcf" stroke-width="0.45" stroke-linejoin="round"/><path d="M383.0,151.5 L386.0,145.0 L390.0,139.0" fill="none" stroke="#cfcfcf" stroke-width="0.45" stroke-linejoin="round"/><path d="M395.0,172.0 L405.0,172.0 L412.0,176.0" fill="none" stroke="#cfcfcf" stroke-width="0.45" stroke-linejoin="round"/><path d="M219.3,137.6 L231.6,135.8 L241.6,137.6 L237.5,144.6 L235.2,149.3 L237.5,152.8 L236.3,155.2 L231.6,149.9 L223.4,148.7 L216.4,151.6 L207.0,155.2 L211.7,150.5 L210.5,148.1 L213.5,143.4 L216.4,141.7Z" fill="#33579a" stroke="#33579a" stroke-width="0.4" stroke-linejoin="round"/><path d="M237.5,163.4 L270.3,163.4 L276.2,165.7 L278.5,171.6 L284.4,169.2 L293.8,165.7 L295.5,166.3 L294.9,169.2 L289.1,172.7 L286.7,175.1 L282.0,180.9 L279.7,185.6 L273.8,186.8 L275.0,193.8 L273.2,194.4 L271.5,189.1 L268.0,187.4 L263.9,188.0 L257.4,190.3 L256.2,193.8 L253.9,191.5 L250.4,186.8 L244.5,185.6 L238.7,183.9 L234.6,180.9 L233.4,175.1 L235.2,169.2Z" fill="#33579a" stroke="#33579a" stroke-width="0.4" stroke-linejoin="round"/><path d="M446.5,182.0 L450.1,181.2 L451.6,187.1 L457.4,190.8 L464.0,191.5 L467.0,190.8 L472.8,189.3 L471.4,195.2 L468.4,198.4 L465.5,196.6 L458.9,205.4 L456.0,214.2 L454.5,217.1 L451.6,209.8 L447.2,202.5 L443.5,197.4 L442.8,194.4 L445.7,191.5 L447.2,187.1Z" fill="#c6d4ec" stroke="#8fa3c8" stroke-width="0.5" stroke-linejoin="round"/></svg>
<svg style="position:absolute;left:194px;top:326px;" width="32" height="18" viewBox="194 326 32 18"><circle cx="201.2" cy="334" r="4.2" fill="none" stroke="#c8c8c8" stroke-width="1.1"/><path d="M199.2,334 H203.2" stroke="#c8c8c8" stroke-width="1.1"/><path d="M204.3,337.2 L206.2,339.2" stroke="#c8c8c8" stroke-width="1.3"/><circle cx="217.5" cy="335.3" r="5.6" fill="#555"/><path d="M215.6,332 Q218.6,330.8 220.4,332.8 Q219.6,335.6 218.4,337.8 Q217.6,339.6 216.6,338.2 Q216.4,336.2 214.6,334.8 Z" fill="#fff"/></svg>
<div style="position:absolute;left:223px;top:328px;width:51px;height:13px;background:#f1f6fb;"></div>
<div class="t" style="left:226.60px;top:329.80px;font-size:10.4px;color:#4583c4;font-weight:normal;">Countries</div>
<div style="position:absolute;left:401px;top:328px;width:73px;height:18px;background:#fff;box-shadow:0 0 1px rgba(0,0,0,0.18);"></div>
<div style="position:absolute;left:478px;top:328px;width:75px;height:18px;background:#fff;box-shadow:0 0 1px rgba(0,0,0,0.18);"></div>
<div class="t" style="left:407.80px;top:333.07px;font-size:8.3px;color:#444;font-weight:normal;transform:scaleX(0.88);transform-origin:0 0;">Worldwide</div>
<div class="t" style="left:486.00px;top:333.07px;font-size:8.3px;color:#444;font-weight:normal;transform:scaleX(0.88);transform-origin:0 0;">Visits</div>
<svg style="position:absolute;left:460px;top:332px;" width="16" height="10" viewBox="460 332 16 10"><path d="M464.6,335.4 L467.8,338.4 L471,335.4" fill="none" stroke="#222" stroke-width="1.6"/></svg>
<svg style="position:absolute;left:538px;top:332px;" width="16" height="10" viewBox="538 332 16 10"><path d="M542.6,335.4 L545.8,338.4 L549,335.4" fill="none" stroke="#222" stroke-width="1.6"/></svg>
<div style="position:absolute;left:181px;top:381px;width:406px;height:178px;background:#fff;border-radius:2px;box-shadow:0 1px 2px rgba(0,0,0,0.18),0 0 1px rgba(0,0,0,0.10);"></div>
<div class="t" style="left:196.50px;top:400.45px;font-size:17.9px;color:#333;font-weight:normal;-webkit-text-stroke:0.3px #333;">Continent</div>
<svg style="position:absolute;left:0px;top:427px;" width="1024" height="20" viewBox="0 427 1024 20"><path d="M197.10,440.50 L203.90,440.50 A2.85,2.85 0 0 0 204.60,434.90 A4.25,4.25 0 0 0 195.10,436.60 A2.0,2.0 0 0 0 197.10,440.50 Z" fill="#f1f9f1" stroke="#79b67b" stroke-width="1.1" stroke-linejoin="round"/><path d="M228.40,431.30 H226.20 Q224.80,431.30 224.80,432.70 V441.50 Q224.80,442.90 226.20,442.90 H233.40 Q234.80,442.90 234.80,441.50 V437.70" fill="none" stroke="#79b67b" stroke-width="1.1" stroke-linejoin="round"/><path d="M228.70,438.90 V437.30 Q228.70,434.90 231.00,434.90 H233.60 M231.80,432.90 L233.80,434.90 L231.80,436.90" fill="none" stroke="#79b67b" stroke-width="1.1" stroke-linecap="round" stroke-linejoin="round"/></svg>
<div class="t" style="left:202.40px;top:467.75px;font-size:30.3px;color:#3a629c;font-weight:normal;">Asia</div>
<div class="t" style="left:281.60px;top:465.17px;font-size:34.3px;color:#28538c;font-weight:normal;">North America</div>
<svg style="position:absolute;left:0px;top:520px;" width="1024" height="20" viewBox="0 520 1024 20"><path d="M197.10,533.50 L203.90,533.50 A2.85,2.85 0 0 0 204.60,527.90 A4.25,4.25 0 0 0 195.10,529.60 A2.0,2.0 0 0 0 197.10,533.50 Z" fill="#f1f9f1" stroke="#79b67b" stroke-width="1.1" stroke-linejoin="round"/><path d="M228.40,524.30 H226.20 Q224.80,524.30 224.80,525.70 V534.50 Q224.80,535.90 226.20,535.90 H233.40 Q234.80,535.90 234.80,534.50 V530.70" fill="none" stroke="#79b67b" stroke-width="1.1" stroke-linejoin="round"/><path d="M228.70,531.90 V530.30 Q228.70,527.90 231.00,527.90 H233.60 M231.80,525.90 L233.80,527.90 L231.80,529.90" fill="none" stroke="#79b67b" stroke-width="1.1" stroke-linecap="round" stroke-linejoin="round"/></svg>
<div style="position:absolute;left:181px;top:571px;width:406px;height:64px;background:#fff;border-radius:2px;box-shadow:0 1px 2px rgba(0,0,0,0.18),0 0 1px rgba(0,0,0,0.10);"></div>
<svg style="position:absolute;left:190px;top:585px;" width="80" height="35" viewBox="190 585 80 35"><path d="M198.6,610.2 H255.2 L262,595.7" fill="none" stroke="#b5b5b5" stroke-width="1.1"/><circle cx="255.2" cy="610.2" r="1.6" fill="#e35d5d"/><circle cx="262" cy="595.7" r="1.6" fill="#4a90e2"/></svg>
<div class="t" style="left:271.40px;top:598.10px;font-size:10.4px;color:#444;font-weight:normal;"><b style="color:#222">2</b> distinct countries</div>
</body></html>
